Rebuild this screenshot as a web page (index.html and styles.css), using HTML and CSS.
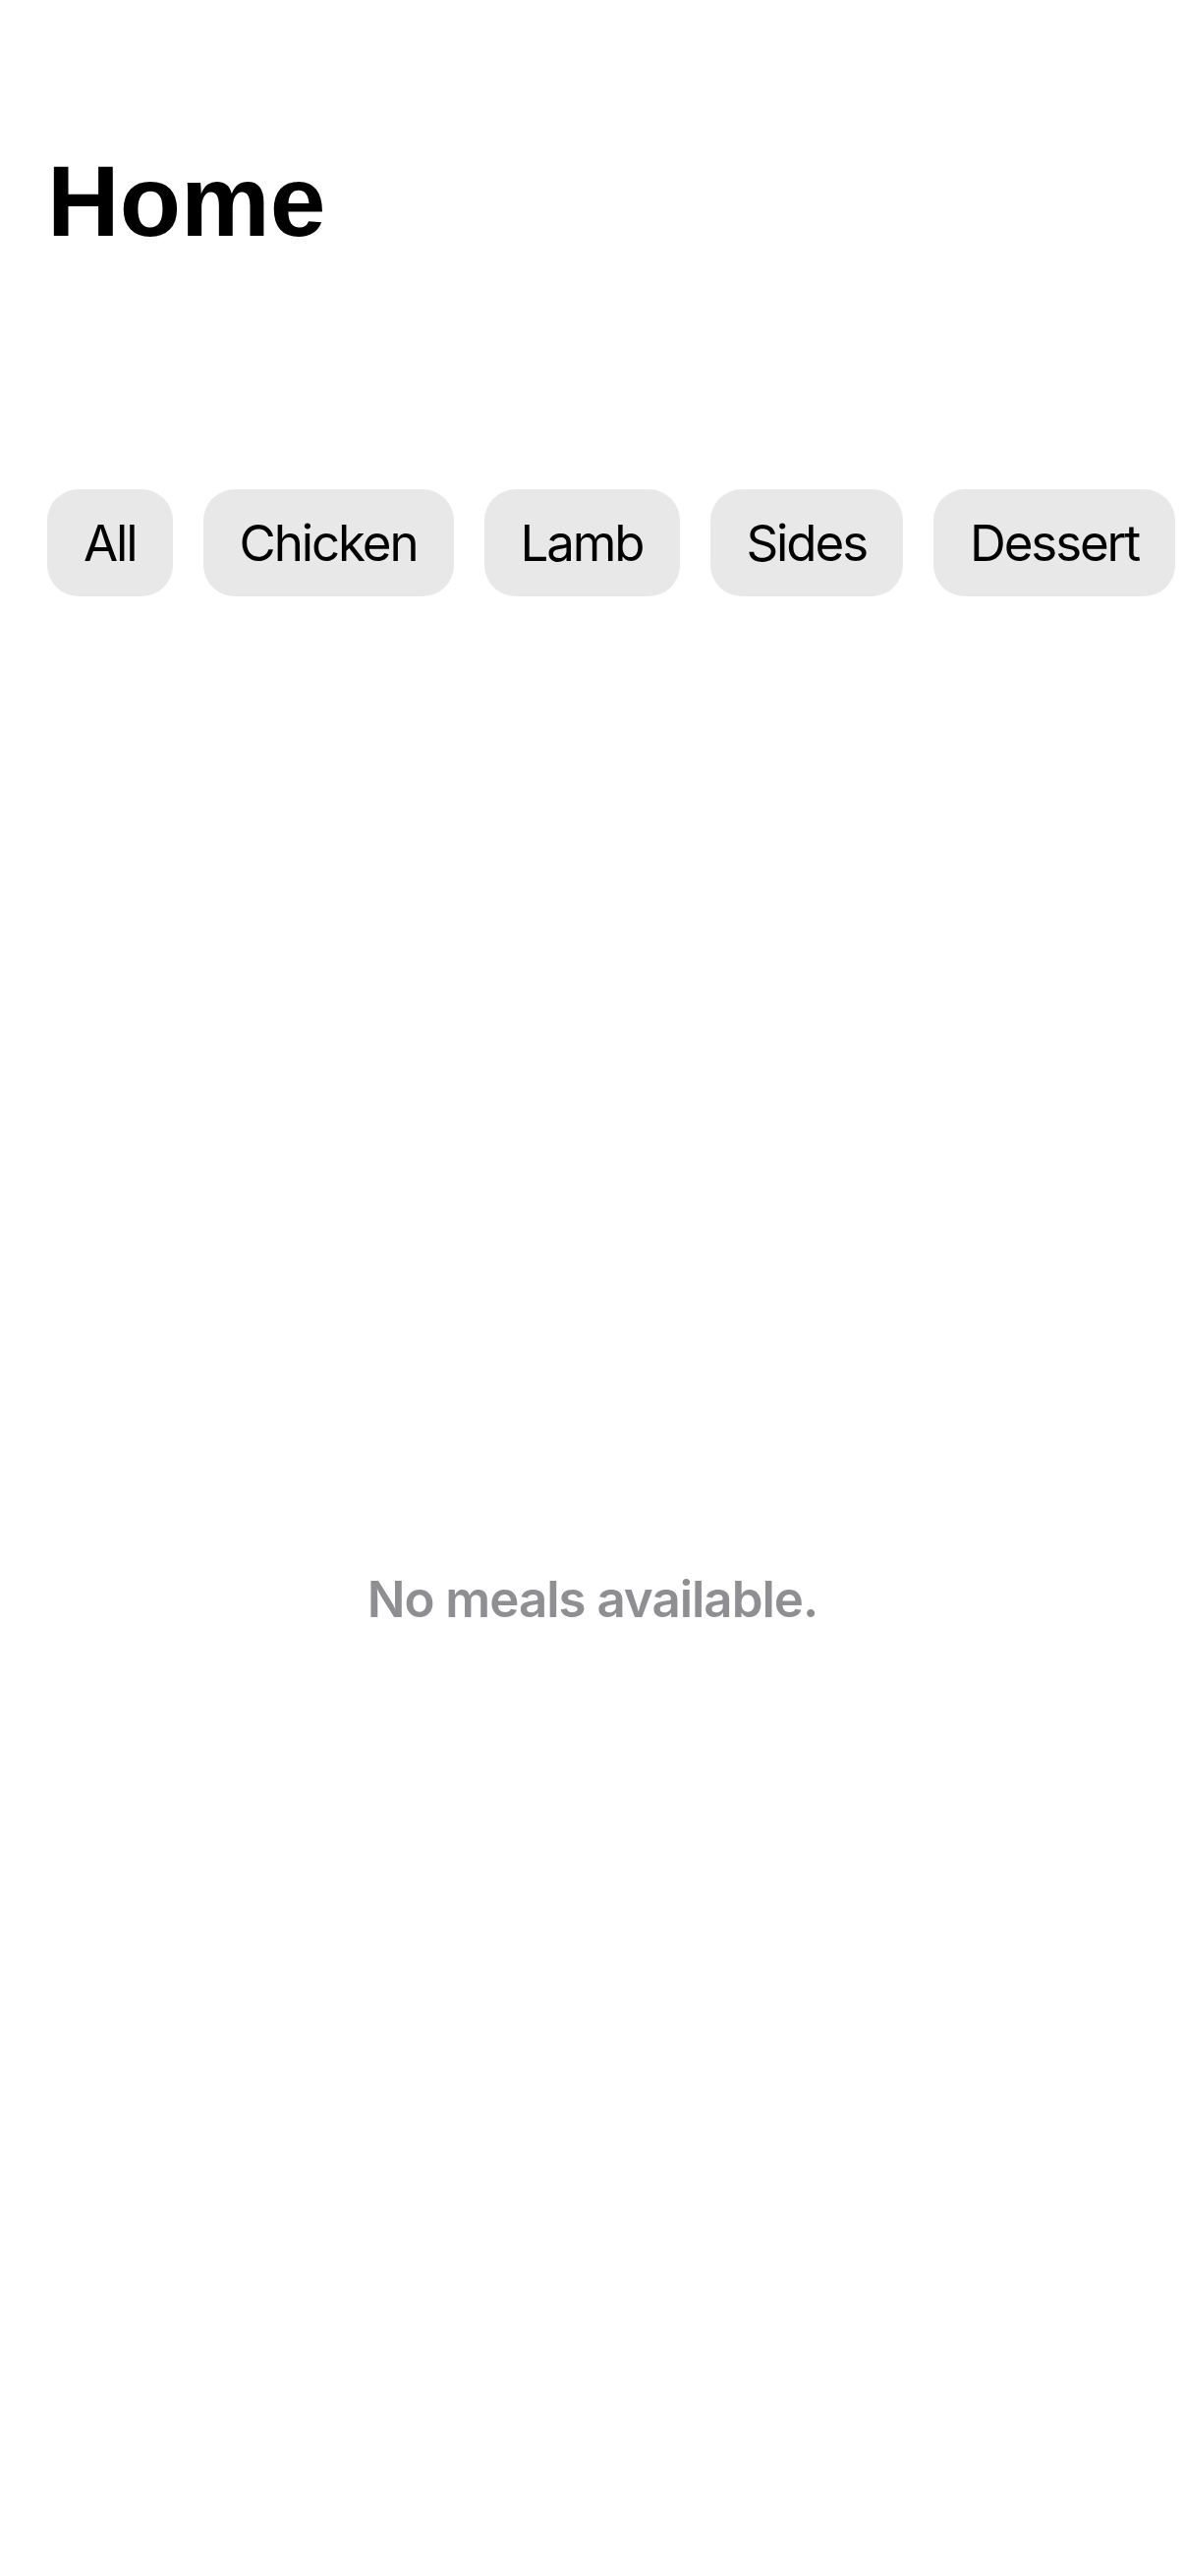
FILE: index.html
```html
<!DOCTYPE html>
<html lang="en">
<head>
<meta charset="utf-8">
<title>Home</title>
<link rel="stylesheet" href="styles.css">
</head>
<body>
  <main class="screen">
    <h1 class="title">Home</h1>
    <nav class="chips">
      <button class="chip">All</button>
      <button class="chip">Chicken</button>
      <button class="chip">Lamb</button>
      <button class="chip">Sides</button>
      <button class="chip">Dessert</button>
    </nav>
    <section class="empty">
      <p class="empty-text">No meals available.</p>
    </section>
  </main>
</body>
</html>
```

FILE: styles.css
```css
html, body {
  margin: 0;
  padding: 0;
  background: #ffffff;
}

.screen {
  width: 1206px;
  height: 2622px;
  box-sizing: border-box;
  padding: 144px 0 0 48px;
  display: flex;
  flex-direction: column;
  overflow: hidden;
}

.title {
  margin: 0;
  font-family: "Liberation Sans", Arial, sans-serif;
  font-weight: 700;
  font-size: 102px;
  line-height: 122px;
  color: #000000;
}

.chips {
  margin-top: 232px;
  display: flex;
  flex-wrap: nowrap;
  gap: 31px;
}

.chip {
  flex: none;
  border: none;
  margin: 0;
  background: #e8e8e8;
  border-radius: 32px;
  padding: 24px 37px;
  height: 109px;
  box-sizing: border-box;
  font-family: Inter, "Noto Sans", sans-serif;
  font-weight: 400;
  font-size: 51px;
  line-height: 61px;
  letter-spacing: -2.1px;
  color: #000000;
}

.empty {
  margin-top: 990px;
  margin-left: -48px;
  display: flex;
  justify-content: center;
}

.empty-text {
  margin: 0;
  font-family: Inter, "Noto Sans", sans-serif;
  font-weight: 600;
  font-size: 51px;
  line-height: 62px;
  letter-spacing: -1px;
  color: #8e8e93;
}
```
